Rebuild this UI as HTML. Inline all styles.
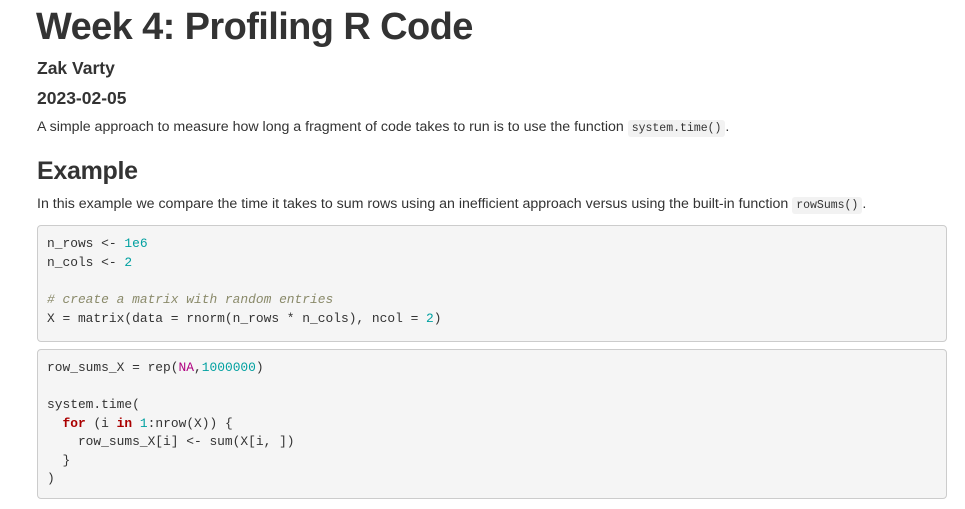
<!DOCTYPE html>
<html><head><meta charset="utf-8"><style>
body{margin:0;background:#fff;color:#333;font-family:"Liberation Sans",Arial,sans-serif;width:965px;height:509px;overflow:hidden}
.c{position:absolute;left:37px}
h1{position:absolute;left:36px;top:1px;margin:0;font-size:38px;font-weight:bold;letter-spacing:-0.6px;line-height:52px;color:#333}
.a{top:57px;font-size:17.5px;font-weight:bold;line-height:22px}
.d{top:87px;font-size:17.5px;font-weight:bold;line-height:22px}
p{margin:0;font-size:14.2px;line-height:20px}
code{font-family:"Liberation Mono",monospace;font-size:11.5px;background:#f2f2f2;padding:2px 4px;border-radius:3px;color:#333}
h2{position:absolute;left:37px;top:155px;margin:0;font-size:25px;font-weight:bold;letter-spacing:-0.3px;line-height:32px}
pre{position:absolute;left:37px;width:890px;margin:0;padding:9px 9px;background:#f5f5f5;border:1px solid #ccc;border-radius:4px;font-family:"Liberation Mono",monospace;font-size:12.9px;line-height:18.7px;color:#333}
.n{color:#00a0a0}.k{color:#a00;font-weight:bold}.m{color:#8a8a6a;font-style:italic}.na{color:#b00080}
</style></head><body>
<h1>Week 4: Profiling R Code</h1>
<div class="c a">Zak Varty</div>
<div class="c d">2023-02-05</div>
<p class="c" style="top:117px">A simple approach to measure how long a fragment of code takes to run is to use the function <code>system.time()</code>.</p>
<h2>Example</h2>
<p class="c" style="top:194px">In this example we compare the time it takes to sum rows using an inefficient approach versus using the built-in function <code>rowSums()</code>.</p>
<pre style="top:225px;padding-bottom:12px">n_rows &lt;- <span class="n">1e6</span>
n_cols &lt;- <span class="n">2</span>

<span class="m"># create a matrix with random entries</span>
X = matrix(data = rnorm(n_rows * n_cols), ncol = <span class="n">2</span>)</pre>
<pre style="top:349px;line-height:18.5px">row_sums_X = rep(<span class="na">NA</span>,<span class="n">1000000</span>)

system.time(
  <span class="k">for</span> (i <span class="k">in</span> <span class="n">1</span>:nrow(X)) {
    row_sums_X[i] &lt;- sum(X[i, ])
  }
)</pre>
</body></html>
